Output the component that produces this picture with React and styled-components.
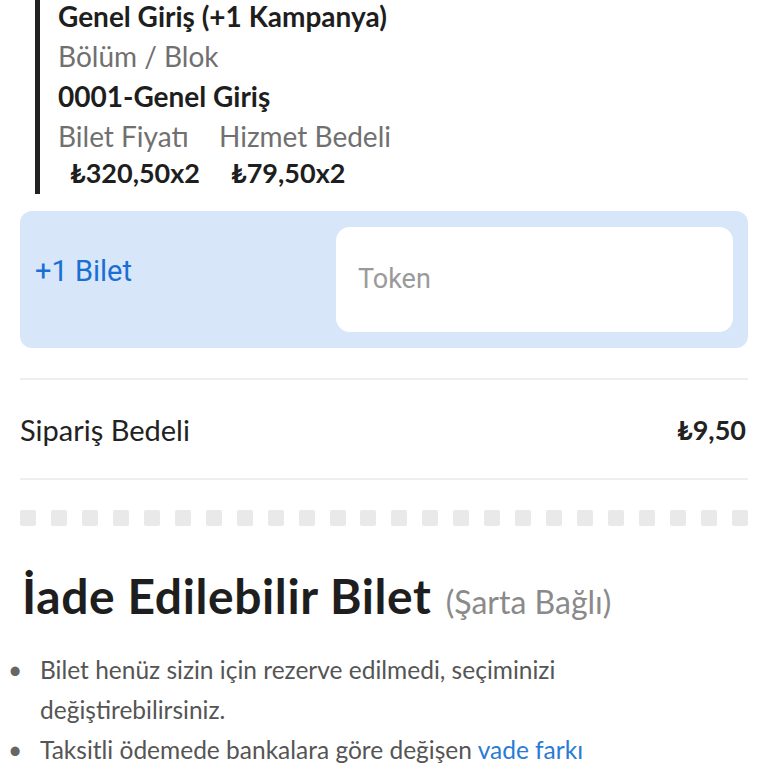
import React from 'react'
import styled, { createGlobalStyle } from 'styled-components'

const GlobalStyle = createGlobalStyle`
  body {
    margin: 0;
    background: #fff;
    font-family: Lato, "Noto Sans", sans-serif;
    color: #222;
  }
`

const App = () => {
  const dots = Array.from({ length: 24 })
  return (
    <>
      <GlobalStyle />
      <Page>
        <TicketInfo>
          <Title>Genel Giriş (+1 Kampanya)</Title>
          <Label>Bölüm / Blok</Label>
          <Title>0001-Genel Giriş</Title>
          <PriceGrid>
            <Label>Bilet Fiyatı</Label>
            <Label>Hizmet Bedeli</Label>
            <Price>₺320,50x2</Price>
            <Price>₺79,50x2</Price>
          </PriceGrid>
        </TicketInfo>

        <TokenBox>
          <TokenLabel>+1 Bilet</TokenLabel>
          <TokenInput placeholder="Token" />
        </TokenBox>

        <Divider $top={30} />
        <SummaryRow>
          <span>Sipariş Bedeli</span>
          <strong>₺9,50</strong>
        </SummaryRow>
        <Divider />

        <DotRow>
          {dots.map((_, i) => (
            <Dot key={i} />
          ))}
        </DotRow>

        <Heading>
          İade Edilebilir Bilet <Sub>(Şarta Bağlı)</Sub>
        </Heading>

        <Notes>
          <Note>
            <Bullet>•</Bullet>
            <span>Bilet henüz sizin için rezerve edilmedi, seçiminizi değiştirebilirsiniz.</span>
          </Note>
          <Note>
            <Bullet>•</Bullet>
            <span>
              Taksitli ödemede bankalara göre değişen <Link>vade farkı</Link>
            </span>
          </Note>
        </Notes>
      </Page>
    </>
  )
}

export default App

const Page = styled.div`
  width: 768px;
  height: 768px;
  overflow: hidden;
  padding: 0 20px;
  box-sizing: border-box;
`

const TicketInfo = styled.div`
  margin-left: 15px;
  border-left: 5px solid #222;
  padding: 0 0 4px 18px;
  margin-top: -4px;
`

const Title = styled.div`
  font-size: 28px;
  font-weight: 700;
  line-height: 40px;
  color: #1e1e1e;
`

const Label = styled.div`
  font-size: 28px;
  line-height: 40px;
  color: #707070;
`

const PriceGrid = styled.div`
  display: grid;
  grid-template-columns: auto auto;
  justify-content: start;
  column-gap: 19px;
`

const Price = styled.div`
  font-size: 27px;
  font-weight: 700;
  line-height: 34px;
  padding-left: 12px;
  color: #1e1e1e;
`

const TokenBox = styled.div`
  margin-top: 17px;
  height: 137px;
  box-sizing: border-box;
  background: #d7e6f8;
  border-radius: 12px;
  display: flex;
  align-items: center;
  padding: 15px 15px 16px 15px;
`

const TokenLabel = styled.div`
  width: 301px;
  font-family: Roboto, sans-serif;
  font-size: 29px;
  color: #1a6fd4;
  margin-top: -16px;
`

const TokenInput = styled.input`
  flex: 1;
  height: 105px;
  box-sizing: border-box;
  border: none;
  border-radius: 14px;
  background: #fff;
  padding: 0 22px;
  font-family: Roboto, sans-serif;
  font-size: 27px;
  outline: none;
  &::placeholder {
    color: #9a9a9a;
  }
`

const Divider = styled.div`
  height: 2px;
  background: #eeeeee;
  margin-top: ${(p) => p.$top || 0}px;
`

const SummaryRow = styled.div`
  height: 98px;
  display: flex;
  align-items: center;
  justify-content: space-between;
  font-size: 29px;
  color: #222;
  strong {
    font-size: 27px;
    font-weight: 700;
    margin-right: 2px;
  }
`

const DotRow = styled.div`
  display: flex;
  justify-content: space-between;
  margin-top: 30px;
`

const Dot = styled.span`
  width: 16px;
  height: 16px;
  border-radius: 2px;
  background: #e9e9e9;
`

const Heading = styled.h2`
  margin: 42px 0 0 2px;
  font-size: 48px;
  font-weight: 700;
  letter-spacing: 0.6px;
  line-height: 56px;
  color: #1e1e1e;
`

const Sub = styled.span`
  margin-left: 2px;
  font-size: 32px;
  font-weight: 400;
  letter-spacing: 0;
  color: #8a8a8a;
`

const Notes = styled.ul`
  list-style: none;
  margin: 20px 0 0 -20px;
  padding: 0;
  max-width: 600px;
  font-size: 24.5px;
  line-height: 40px;
  color: #555;
`

const Note = styled.li`
  display: flex;
`

const Bullet = styled.span`
  flex: 0 0 40px;
  box-sizing: border-box;
  padding-left: 8px;
  color: #666;
`

const Link = styled.span`
  color: #2a7bd6;
`
